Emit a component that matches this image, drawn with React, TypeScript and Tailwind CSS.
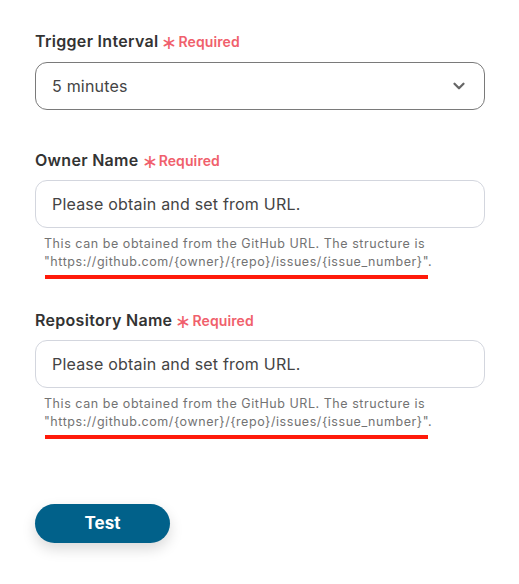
import { ChevronDown } from "lucide-react";

function Label({ text }: { text: string }) {
    return (
        <div className="flex items-center gap-[3px] h-[22px]">
            <span className="text-[16px] font-semibold tracking-[0.3px] text-[#333333]">{text}</span>
            <span className="flex items-center gap-[1px] text-[14px] font-semibold tracking-[0.1px] text-[#f0606c]">
                <span className="text-[19px] leading-none font-normal mt-[3px]">∗</span>Required
            </span>
        </div>
    );
}

function UrlField({ label }: { label: string }) {
    return (
        <div className="flex flex-col">
            <Label text={label} />
            <div className="mt-[9px] h-[48px] rounded-[12px] border border-[#d3d6de] bg-white flex items-center px-[16px] text-[16px] tracking-[0.2px] text-[#444444]">
                Please obtain and set from URL.
            </div>
            <p className="mt-[7px] pl-[9px] text-[12.5px] leading-[18px] tracking-[0.55px] text-[#737373]">
                This can be obtained from the GitHub URL. The structure is
                <br />
                "https://github.com/{"{owner}"}/{"{repo}"}/issues/{"{issue_number}"}".
            </p>
            <div className="ml-[10px] mt-[4px] h-[4px] w-[383px] bg-[#ff1a0a]" />
        </div>
    );
}

export default function App() {
    return (
        <div className="w-[519px] h-[584px] bg-white px-[35px] pt-[30px] font-['Inter',sans-serif]">
            <Label text="Trigger Interval" />
            <div className="mt-[10px] h-[48px] w-[450px] rounded-[12px] border border-[#7a7a7a] flex items-center justify-between px-[16px] text-[16px] tracking-[0.2px] text-[#444444]">
                5 minutes
                <ChevronDown className="w-[18px] h-[18px] text-[#666666]" strokeWidth={3} />
            </div>
            <div className="mt-[39px] w-[450px]">
                <UrlField label="Owner Name" />
            </div>
            <div className="mt-[30px] w-[450px]">
                <UrlField label="Repository Name" />
            </div>
            <button className="mt-[65px] h-[39px] w-[135px] rounded-full bg-[#01618a] text-white text-[17px] font-bold shadow-[0_6px_14px_rgba(0,0,0,0.15)]">
                Test
            </button>
        </div>
    );
}
